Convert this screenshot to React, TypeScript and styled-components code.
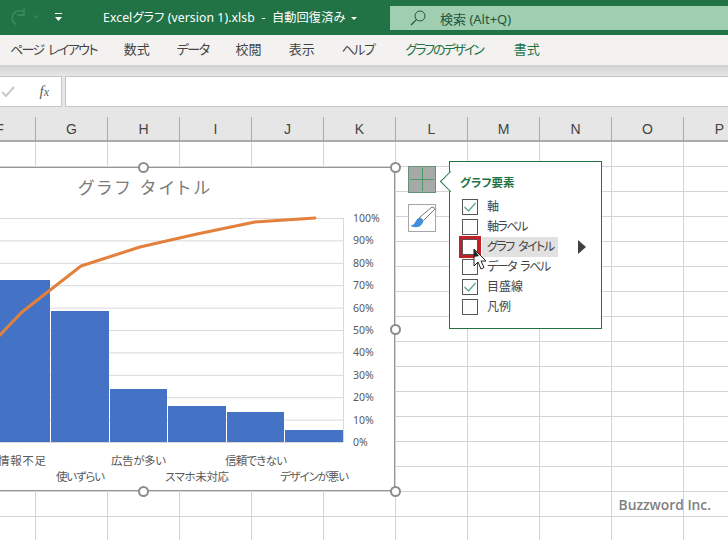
import styled, { createGlobalStyle } from 'styled-components';

const FONT = `"Noto Sans", "Noto Sans CJK JP", sans-serif`;
const CJK = `"Noto Sans CJK JP", "Noto Sans", sans-serif`;

const tabs = [
    { label: 'ページ レイアウト', spacing: -1.6 },
    { label: '数式', spacing: 0 },
    { label: 'データ', spacing: -1.5 },
    { label: '校閲', spacing: 0 },
    { label: '表示', spacing: 0 },
    { label: 'ヘルプ', spacing: -1.5 },
    { label: 'グラフのデザイン', spacing: -2.1, chart: true },
    { label: '書式', spacing: 0, chart: true },
];

const columns = ['F', 'G', 'H', 'I', 'J', 'K', 'L', 'M', 'N', 'O', 'P'];

const elements = [
    { label: '軸', checked: true },
    { label: '軸ラベル', checked: false, tight: true },
    { label: 'グラフ タイトル', checked: false, active: true, tight: true },
    { label: 'データ ラベル', checked: false, tight: true },
    { label: '目盛線', checked: true },
    { label: '凡例', checked: false },
];

// page coordinates, the chart's left part is scrolled out of the window
const bars = [
    { x: -10, w: 60, top: 280 },
    { x: 51, w: 58, top: 311 },
    { x: 110, w: 57, top: 389 },
    { x: 168, w: 58, top: 406 },
    { x: 227, w: 57, top: 412 },
    { x: 285, w: 58, top: 430 },
];
const linePoints = '-20,354 0,335 22,312 81,266 140,247 197,234 255,222 315,218';
const xLabels = [
    { text: '情報不足', x: -2, y: 465, w: 48 },
    { text: '使いずらい', x: 56, y: 481, w: 49 },
    { text: '広告が多い', x: 111, y: 465, w: 55 },
    { text: 'スマホ未対応', x: 165, y: 481, w: 64 },
    { text: '信頼できない', x: 225, y: 465, w: 62 },
    { text: 'デザインが悪い', x: 280, y: 481, w: 69 },
];
const percents = [100, 90, 80, 70, 60, 50, 40, 30, 20, 10, 0];
const handles = [
    { x: '50%', y: '0%' },
    { x: '100%', y: '0%' },
    { x: '100%', y: '50%' },
    { x: '50%', y: '100%' },
    { x: '100%', y: '100%' },
];

function Chart() {
    return (
        <ChartFrame>
            <svg width="504" height="324" viewBox="-109 167 504 324">
                {percents.map((p, i) => (
                    <line key={p} x1={-109} x2={343} y1={218.5 + i * 22.4} y2={218.5 + i * 22.4} stroke="#d9d9d9" strokeWidth="1" />
                ))}
                <line x1={343.5} x2={343.5} y1={218} y2={442} stroke="#d9d9d9" />
                {bars.map(b => (
                    <rect key={b.x} x={b.x} y={b.top} width={b.w} height={442 - b.top} fill="#4472c4" />
                ))}
                <polyline points={linePoints} fill="none" stroke="#e2803e" strokeWidth="3" strokeLinecap="round" strokeLinejoin="round" />
                <ChartTitle x={78} y={194} textLength={132}>グラフ タイトル</ChartTitle>
                {percents.map((p, i) => (
                    <AxisLabel key={p} x={353} y={222 + i * 22.4}>{p}%</AxisLabel>
                ))}
                {xLabels.map(l => (
                    <CategoryLabel key={l.text} x={l.x} y={l.y} textLength={l.w}>{l.text}</CategoryLabel>
                ))}
            </svg>
            {handles.map(h => <Handle key={h.x + h.y} $x={h.x} $y={h.y} />)}
        </ChartFrame>
    );
}

function CheckMark() {
    return (
        <svg width="14" height="14" viewBox="0 0 14 14">
            <polyline points="1.5,7 5.5,11 12.5,3" fill="none" stroke="#5aa97f" strokeWidth="1.2" />
        </svg>
    );
}

export default function App() {
    return (
        <Page>
            <GlobalStyle />
            <TitleBar>
                <TitleLeft>
                    <svg width="16" height="18" viewBox="0 0 16 18">
                        <path d="M13 3.5 A7 7 0 1 0 6 16.5" fill="none" stroke="#3f9068" strokeWidth="1.3" />
                        <polyline points="14,0.5 14,7 7.5,7" fill="none" stroke="#3f9068" strokeWidth="1.3" />
                    </svg>
                    <RedoCaret>
                        <svg width="6" height="4" viewBox="0 0 6 4">
                            <polyline points="0.5,0.5 3,3 5.5,0.5" fill="none" stroke="#3f9068" strokeWidth="1" />
                        </svg>
                    </RedoCaret>
                    <QatMenu>
                        <svg width="9" height="9" viewBox="0 0 9 9">
                            <rect x="1" y="0" width="7" height="1" fill="#fff" />
                            <polygon points="1,4 8,4 4.5,8" fill="#fff" />
                        </svg>
                    </QatMenu>
                    <DocTitle>Excelグラフ (version 1).xlsb&nbsp; - &nbsp;自動回復済み</DocTitle>
                    <DocCaret />
                </TitleLeft>
                <SearchBox>
                    <svg width="16" height="16" viewBox="0 0 16 16">
                        <circle cx="10" cy="6" r="5" fill="none" stroke="#24543c" strokeWidth="1" />
                        <line x1="6.4" y1="9.6" x2="1" y2="15" stroke="#24543c" strokeWidth="1.2" />
                    </svg>
                    <SearchText>検索 (Alt+Q)</SearchText>
                </SearchBox>
            </TitleBar>

            <RibbonTabs>
                {tabs.map(t => <RibbonTab key={t.label} $chart={t.chart} $spacing={t.spacing}>{t.label}</RibbonTab>)}
            </RibbonTabs>

            <FormulaArea>
                <NameBox>
                    <svg width="14" height="11" viewBox="0 0 14 11">
                        <polyline points="1,6 5,10 13,1" fill="none" stroke="#c9c9c9" strokeWidth="2" />
                    </svg>
                    <FxLabel>f<small>x</small></FxLabel>
                </NameBox>
                <FormulaInput />
            </FormulaArea>

            <ColumnHeaders>
                {columns.map(c => <ColumnHeader key={c} $first={c === 'F'}>{c}</ColumnHeader>)}
            </ColumnHeaders>

            <Sheet>
                <Chart />
                <PlusButton>
                    <svg width="26" height="25" viewBox="0 0 26 25">
                        <line x1="13.5" y1="1" x2="13.5" y2="24" stroke="#4c9a69" />
                        <line x1="1" y1="12.5" x2="25" y2="12.5" stroke="#4c9a69" />
                    </svg>
                </PlusButton>
                <BrushButton>
                    <svg width="26" height="26" viewBox="0 0 26 26">
                        <polygon points="10.5,12.5 23,2 25,2.5 25.5,4.5 14.5,15.5" fill="#fff" stroke="#777" />
                        <path d="M11 12.5 C7 13.5 7 17 5 19 C4 20 2 21 1 20.5 C4 23 11 23 13 19 C14 17.5 14.5 16.5 14 15.5 Z" fill="#3f8fdc" />
                    </svg>
                </BrushButton>

                <ElementsPopup>
                    <PopupTitle>グラフ要素</PopupTitle>
                    {elements.map(el => (
                        <ElementRow key={el.label}>
                            <CheckBox $marked={el.active}>{el.checked && <CheckMark />}</CheckBox>
                            <ElementLabel $active={el.active} $tight={el.tight}>{el.label}</ElementLabel>
                            {el.active && <SubMenuArrow />}
                        </ElementRow>
                    ))}
                </ElementsPopup>

                <Cursor width="14" height="24" viewBox="0 0 14 24">
                    <path d="M1 1 L1 18 L5 14 L8 21 L11 19.5 L8 13 L13 13 Z" fill="#fff" stroke="#222" strokeWidth="1" />
                    <path d="M1 1 L1 9 L6 8 Z" fill="#222" />
                </Cursor>

                <Watermark>Buzzword Inc.</Watermark>
            </Sheet>
        </Page>
    );
}

const GlobalStyle = createGlobalStyle`
    html, body {
        margin: 0;
        padding: 0;
        background: #fff;
        overflow: hidden;
    }
    * {
        box-sizing: border-box;
    }
`

const Page = styled.div`
    width: 728px;
    height: 540px;
    display: flex;
    flex-direction: column;
    overflow: hidden;
    font-family: ${FONT};
    font-feature-settings: "palt";
`
const TitleBar = styled.div`
    height: 35px;
    flex: none;
    display: flex;
    background-color: #217346;
`
const TitleLeft = styled.div`
    width: 390px;
    flex: none;
    display: flex;
    align-items: center;
    padding: 0 0 1px 10px;
`
const RedoCaret = styled.div`
    display: flex;
    margin-left: 7px;
`
const QatMenu = styled.div`
    display: flex;
    margin-left: 15px;
`
const DocTitle = styled.div`
    margin-left: 40px;
    color: #fff;
    font-size: 12.2px;
    letter-spacing: 0.1px;
    white-space: nowrap;
`
const DocCaret = styled.div`
    margin-left: 6px;
    margin-top: 2px;
    border-left: 3px solid transparent;
    border-right: 3px solid transparent;
    border-top: 3px solid #fff;
`
const SearchBox = styled.div`
    flex: 1;
    height: 24px;
    margin-top: 6px;
    display: flex;
    align-items: center;
    gap: 14px;
    padding-left: 20px;
    background-color: #9fcfb0;
`
const SearchText = styled.div`
    color: #24543c;
    font-size: 13px;
`
const RibbonTabs = styled.div`
    height: 30px;
    flex: none;
    display: flex;
    align-items: center;
    gap: 27px;
    padding: 0 0 3px 10px;
    background-color: #f3f2f1;
`
const RibbonTab = styled.div<{ $chart?: boolean; $spacing: number }>`
    font-family: ${CJK};
    font-size: 13px;
    white-space: nowrap;
    letter-spacing: ${props => props.$spacing}px;
    word-spacing: 3px;
    margin-left: ${props => (props.$chart ? '4px' : '0')};
    color: ${props => (props.$chart ? '#217346' : '#444444')};
`
const FormulaArea = styled.div`
    height: 42px;
    flex: none;
    display: flex;
    gap: 3px;
    padding-top: 11px;
    background: linear-gradient(#d2d2d2, #e6e6e6 11px);
`
const NameBox = styled.div`
    width: 62px;
    flex: none;
    display: flex;
    align-items: center;
    justify-content: space-between;
    padding: 0 12px 0 1px;
    background-color: #fff;
    border: 1px solid #c6c6c6;
    border-left: none;
`
const FxLabel = styled.div`
    font-family: "Liberation Serif", serif;
    font-style: italic;
    font-size: 15px;
    color: #606060;
    small {
        font-size: 12px;
    }
`
const FormulaInput = styled.div`
    flex: 1;
    background-color: #fff;
    border: 1px solid #c6c6c6;
    border-right: none;
`
const ColumnHeaders = styled.div`
    height: 35px;
    flex: none;
    display: flex;
    padding-top: 10px;
    background-color: #e6e6e6;
    border-bottom: 2px solid #ababab;
`
const ColumnHeader = styled.div<{ $first?: boolean }>`
    width: 72px;
    flex: none;
    display: flex;
    align-items: center;
    justify-content: center;
    margin-left: ${props => (props.$first ? '-36px' : '0')};
    border-right: 1px solid #ababab;
    color: #444;
    font-size: 14px;
    font-family: "Liberation Sans", sans-serif;
`
const Sheet = styled.div`
    position: relative;
    flex: 1;
    background-color: #fff;
    background-image:
        linear-gradient(#d4d4d4 1px, transparent 1px),
        linear-gradient(90deg, #d4d4d4 1px, transparent 1px);
    background-size: 72px 25px;
    background-position: 35px 24px;
`
const ChartFrame = styled.div`
    position: absolute;
    left: -109px;
    top: 25px;
    width: 504px;
    height: 324px;
    background-color: #fff;
    outline: 1.5px solid #959595;
    outline-offset: -1px;
    svg {
        display: block;
    }
`
const ChartTitle = styled.text`
    font-family: ${CJK};
    font-size: 17px;
    fill: #7b7b7b;
`
const AxisLabel = styled.text`
    font-family: ${FONT};
    font-size: 10.5px;
    fill: #595959;
`
const CategoryLabel = styled.text`
    font-family: ${CJK};
    font-size: 11.5px;
    fill: #595959;
`
const Handle = styled.div<{ $x: string; $y: string }>`
    position: absolute;
    left: ${props => props.$x};
    top: ${props => props.$y};
    width: 11px;
    height: 11px;
    margin: -5.5px 0 0 -5.5px;
    border-radius: 50%;
    background-color: #fff;
    border: 2px solid #8c8c8c;
`
const PlusButton = styled.div`
    position: absolute;
    left: 408px;
    top: 24px;
    width: 28px;
    height: 27px;
    background-color: #a5aaa7;
    border: 1px solid #64937a;
    svg {
        display: block;
    }
`
const BrushButton = styled.div`
    position: absolute;
    left: 408px;
    top: 62px;
    width: 28px;
    height: 28px;
    background-color: #fff;
    border: 1px solid #a6a6a6;
    svg {
        display: block;
    }
`
const ElementsPopup = styled.div`
    position: absolute;
    left: 449px;
    top: 19px;
    width: 153px;
    height: 168px;
    background-color: #fff;
    border: 1px solid #217346;
    font-family: ${CJK};
    &::before {
        content: '';
        position: absolute;
        left: -7px;
        top: 12px;
        width: 14px;
        height: 14px;
        background-color: #fff;
        border-left: 1px solid #217346;
        border-bottom: 1px solid #217346;
        transform: rotate(45deg);
    }
`
const PopupTitle = styled.div`
    position: relative;
    padding: 12px 0 0 10px;
    margin-bottom: 7px;
    line-height: 16px;
    font-size: 11.5px;
    font-weight: 700;
    color: #217346;
`
const ElementRow = styled.div`
    height: 20px;
    display: flex;
    align-items: center;
    padding-left: 12px;
`
const CheckBox = styled.div<{ $marked?: boolean }>`
    width: 16px;
    height: 16px;
    flex: none;
    display: flex;
    align-items: center;
    justify-content: center;
    background-color: #fdfdfd;
    border: 1px solid #555;
    outline: ${props => (props.$marked ? '3px solid #c02126' : 'none')};
`
const ElementLabel = styled.div<{ $active?: boolean; $tight?: boolean }>`
    width: ${props => (props.$active ? '76px' : 'auto')};
    height: 20px;
    margin-left: 4px;
    padding-left: 5px;
    line-height: 18px;
    font-size: 12px;
    letter-spacing: ${props => (props.$tight ? '-1.5px' : '0')};
    word-spacing: 3px;
    white-space: nowrap;
    color: #444;
    background-color: ${props => (props.$active ? '#e1e1e1' : 'transparent')};
`
const SubMenuArrow = styled.div`
    margin-left: 20px;
    border-top: 7px solid transparent;
    border-bottom: 7px solid transparent;
    border-left: 8px solid #404040;
`
const Cursor = styled.svg`
    position: absolute;
    left: 473px;
    top: 106px;
`
const Watermark = styled.div`
    position: absolute;
    right: 17px;
    top: 353px;
    font-family: "Open Sans", sans-serif;
    font-weight: 600;
    font-size: 13.8px;
    line-height: 20px;
    color: #808080;
`
